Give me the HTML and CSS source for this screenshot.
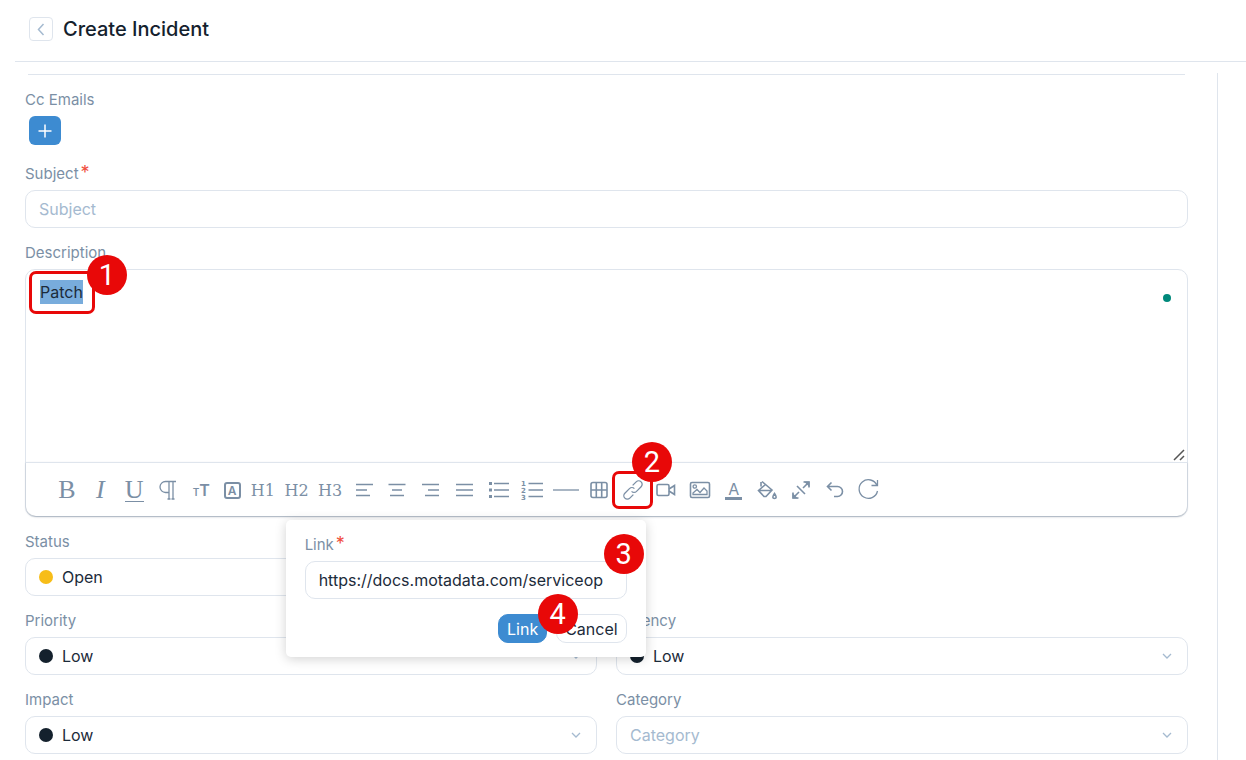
FILE: index.html
```html
<!DOCTYPE html>
<html lang="en">
<head>
  <meta charset="UTF-8">
  <meta name="viewport" content="width=device-width, initial-scale=1.0">
  <title>Create Incident</title>
  <link rel="stylesheet" href="styles.css">
</head>
<body>
  <header class="page-header">
    <button type="button" class="back" aria-label="Back">
      <svg width="24" height="24" viewBox="0 0 24 24"><path d="M14.5 7 L9.5 12.5 L14.5 18"/></svg>
    </button>
    <h1>Create Incident</h1>
  </header>

  <main class="content">
    <form class="incident">
      <div class="scrolled"></div>

      <div class="field">
        <label for="addCc">Cc Emails</label>
        <button type="button" id="addCc" class="add" aria-label="Add Cc email">
          <svg width="14" height="14" viewBox="0 0 14 14"><path d="M7 0.5 V13.5 M0.5 7 H13.5"/></svg>
        </button>
      </div>

      <div class="field">
        <label for="subject">Subject<span class="req">*</span></label>
        <input type="text" id="subject" name="subject" placeholder="Subject" required>
      </div>

      <div class="field">
        <label id="descLabel">Description</label>
        <div class="editor">
          <div class="editor-wrap">
            <div class="editor-body" contenteditable="true" role="textbox" aria-multiline="true" aria-labelledby="descLabel" spellcheck="false"><span class="selected">Patch</span></div>
            <span class="online"></span>
            <svg class="grip" width="14" height="14" viewBox="0 0 14 14"><path d="M1 12 L11 2 M7 12 L11 8"/></svg>
            <div class="callout callout-text"><span class="badge">1</span></div>
          </div>

          <div class="toolbar">
            <div class="tools">
              <button type="button" class="big" title="Bold">B</button>
              <button type="button" class="big" title="Italic"><i>I</i></button>
              <button type="button" class="big underline" title="Underline"><span>U</span></button>
              <button type="button" class="big" title="Paragraph">
                <svg width="24" height="24" viewBox="0 0 24 24"><path d="M20 3.500H9.500a5.500 5.500 0 0 0 0 11H13M13 3.500V21M17 3.500V21M11.500 21H14.500M15.500 21H18.500"/></svg>
              </button>
              <button type="button" class="sans" title="Font size"><small>T</small>T</button>
              <button type="button" class="sans boxed" title="Font family"><span>A</span></button>
              <button type="button" title="Heading 1">H1</button>
              <button type="button" title="Heading 2">H2</button>
              <button type="button" title="Heading 3">H3</button>
              <button type="button" title="Align left">
                <svg width="24" height="24" viewBox="0 0 24 24"><path class="bar" d="M4 6.500H21M4 12H15M4 17.500H18"/></svg>
              </button>
              <button type="button" title="Align center">
                <svg width="24" height="24" viewBox="0 0 24 24"><path class="bar" d="M3.500 6.500H20.500M7 12H17M5 17.500H19"/></svg>
              </button>
              <button type="button" title="Align right">
                <svg width="24" height="24" viewBox="0 0 24 24"><path class="bar" d="M3 6.500H20M9 12H20M6 17.500H20"/></svg>
              </button>
              <button type="button" title="Justify">
                <svg width="24" height="24" viewBox="0 0 24 24"><path class="bar" d="M3 6.500H20M3 12H20M3 17.500H20"/></svg>
              </button>
              <button type="button" title="Bullet list">
                <svg width="24" height="24" viewBox="0 0 24 24"><path d="M8 5.500H23M8 12H23M8 18.500H23"/><path class="fill" d="M3 4h3v3H3zM3 10.500h3v3H3zM3 17h3v3H3z"/></svg>
              </button>
              <button type="button" title="Numbered list">
                <svg width="24" height="24" viewBox="0 0 24 24"><path d="M8.500 5.500H23M8.500 12H23M8.500 18.500H23"/><text x="1" y="8">1</text><text x="1" y="15">2</text><text x="1" y="22">3</text></svg>
              </button>
              <button type="button" title="Horizontal line">
                <svg width="26" height="24" viewBox="0 0 26 24"><path d="M0 12H26"/></svg>
              </button>
              <button type="button" title="Table">
                <svg width="24" height="24" viewBox="0 0 24 24"><rect class="bar" x="4" y="4.500" width="16" height="15" rx="2"/><path class="bar" d="M9.300 4.500V19.500M14.700 4.500V19.500M4 12H20"/></svg>
              </button>
              <div class="link-item">
                <button type="button" title="Link">
                  <svg width="24" height="24" viewBox="0 0 24 24"><g transform="rotate(-45 12 12)"><path d="M9 15.500H4a3.500 3.500 0 0 1 0-7H10.500a3.500 3.500 0 0 1 3.500 3.500"/><path d="M15 8.500H20a3.500 3.500 0 0 1 0 7H13.500a3.500 3.500 0 0 1-3.500-3.500"/></g></svg>
                </button>
                <div class="callout callout-link"><span class="badge">2</span></div>

                <div class="popover" role="dialog" aria-label="Link">
                  <label for="linkUrl">Link<span class="req">*</span></label>
                  <input type="text" id="linkUrl" name="linkUrl" value="https://docs.motadata.com/serviceop">
                  <div class="actions">
                    <button type="button" class="btn primary">Link</button>
                    <button type="button" class="btn">Cancel</button>
                  </div>
                  <span class="badge badge-url">3</span>
                  <span class="badge badge-submit">4</span>
                </div>
              </div>
              <button type="button" title="Video">
                <svg width="24" height="24" viewBox="0 0 24 24"><rect class="bar" x="3" y="6.500" width="12" height="11" rx="1.500"/><path class="bar" d="M15 11 L20.500 7.500V16.500L15 13"/></svg>
              </button>
              <button type="button" title="Image">
                <svg width="24" height="24" viewBox="0 0 24 24"><rect class="bar" x="2.500" y="4.500" width="19" height="15" rx="1.500"/><circle cx="6.800" cy="8.500" r="1.700"/><path d="M5 16.500V15L9 11.500 12 14.500 16 10 19 13V16.500Z"/></svg>
              </button>
              <button type="button" class="sans color" title="Text color"><span>A</span></button>
              <button type="button" title="Background color">
                <svg width="24" height="24" viewBox="0 0 24 24"><path class="bar" d="M7 3.500 L17 12 L11 18.500 H9 L3.500 12.500 L10.500 6.500M4 12.500H17M6 4V8.500"/><path class="bar" d="M19.500 15.500c-2.500 3.500-2 5 0 5s2.500-1.500 0-5z"/></svg>
              </button>
              <button type="button" title="Expand">
                <svg width="24" height="24" viewBox="0 0 24 24"><path class="bar" d="M14 10 L20 4M10 14 L4 20M14.500 4H20V9.500M4 14.500V20H9.500M8 8 L16 16"/><path class="fill" d="M15 3.500H20.500V9zM3.500 15V20.500H9z"/></svg>
              </button>
              <button type="button" title="Undo">
                <svg width="24" height="24" viewBox="0 0 24 24"><path class="bar" d="M8.500 4.500 L4.500 8.500 L8.500 12.500M4.500 8.500H14.500a5 5 0 0 1 0 10H11"/></svg>
              </button>
              <button type="button" title="Redo">
                <svg width="24" height="24" viewBox="0 0 24 24"><path d="M21 7.500A9.300 9.300 0 1 0 21.500 13M21.500 2V7.500H15.500"/></svg>
              </button>
            </div>
          </div>
        </div>
      </div>

      <div class="grid">
        <div class="field first">
          <label for="status">Status</label>
          <div class="select open">
            <select id="status" name="status"><option>Open</option></select>
            <svg width="10" height="6" viewBox="0 0 10 6"><path d="M1 1 L5 5 L9 1"/></svg>
          </div>
        </div>
        <div class="field first">
          <label for="priority">Priority</label>
          <div class="select low">
            <select id="priority" name="priority"><option>Low</option></select>
            <svg width="10" height="6" viewBox="0 0 10 6"><path d="M1 1 L5 5 L9 1"/></svg>
          </div>
        </div>
        <div class="field">
          <label for="urgency">Urgency</label>
          <div class="select low">
            <select id="urgency" name="urgency"><option>Low</option></select>
            <svg width="10" height="6" viewBox="0 0 10 6"><path d="M1 1 L5 5 L9 1"/></svg>
          </div>
        </div>
        <div class="field first">
          <label for="impact">Impact</label>
          <div class="select low">
            <select id="impact" name="impact"><option>Low</option></select>
            <svg width="10" height="6" viewBox="0 0 10 6"><path d="M1 1 L5 5 L9 1"/></svg>
          </div>
        </div>
        <div class="field">
          <label for="category">Category</label>
          <div class="select empty">
            <select id="category" name="category"><option>Category</option></select>
            <svg width="10" height="6" viewBox="0 0 10 6"><path d="M1 1 L5 5 L9 1"/></svg>
          </div>
        </div>
      </div>
    </form>
  </main>
</body>
</html>
```
FILE: styles.css
```css
* {
  margin: 0;
  padding: 0;
  box-sizing: border-box;
  outline: none;
}

body {
  display: flex;
  flex-direction: column;
  height: 100vh;
  font-family: Inter, "Open Sans", sans-serif;
  font-size: 16px;
  color: #1c2b3a;
  background: #fff;
}

button, input, select {
  font: inherit;
  color: inherit;
}

button {
  border: none;
  background: none;
  cursor: pointer;
}

svg {
  display: block;
  fill: none;
  stroke: #7b8fa5;
  stroke-width: 1.3;
}

/* header */
.page-header {
  display: flex;
  align-items: center;
  gap: 10px;
  height: 62px;
  margin-left: 15px;
  padding: 0 14px 4px;
  border-bottom: 1px solid #dfe5ed;
}

.page-header h1 {
  font-size: 20px;
  font-weight: 500;
  line-height: 30px;
  color: #14212d;
}

.back {
  width: 24px;
  height: 24px;
  border: 1px solid #dfe5ed;
  border-radius: 4px;
}

.back svg {
  margin: -1px;
  stroke: #a5bad0;
  stroke-width: 1.5;
}

/* form */
.content {
  flex: 1;
  min-height: 0;
  margin-top: 11px;
  overflow-y: auto;
  scrollbar-width: none;
}

.incident {
  margin-right: 28px;
  padding: 0 29px 0 25px;
  border-right: 1px solid #dfe5ed;
}

.scrolled {
  height: 2px;
  margin: 0 3px 14px;
  border-bottom: 1px solid #dfe5ed;
}

.field {
  margin-bottom: 14px;
}

label {
  display: block;
  margin-bottom: 5px;
  font-size: 15px;
  line-height: 22px;
  color: #7b8fa5;
}

.req {
  margin-left: 2px;
  font-size: 18px;
  line-height: 16px;
  color: #f04e3e;
}

input, select {
  display: block;
  width: 100%;
  height: 38px;
  padding: 0 13px;
  border: 1px solid #dfe5ed;
  border-radius: 10px;
  background: #fff;
}

input::placeholder {
  color: #a5bad0;
}

.add {
  display: flex;
  align-items: center;
  justify-content: center;
  width: 32px;
  height: 29px;
  margin: 0 4px 18px;
  border-radius: 6px;
  background: #3d8bd1;
}

.add svg {
  stroke: #fff;
  stroke-width: 1.5;
}

/* editor */
.editor {
  border: 1px solid #dfe5ed;
  border-radius: 10px;
}

.editor-wrap {
  position: relative;
}

.editor-body {
  height: 192px;
  padding: 10px 14px;
  line-height: 24px;
  overflow: auto;
  resize: vertical;
}

.selected {
  padding: 2px 0;
  background: #78acdc;
}

.online {
  position: absolute;
  top: 24px;
  right: 16px;
  width: 8px;
  height: 8px;
  border-radius: 50%;
  background: #00897b;
}

.grip {
  position: absolute;
  right: 0;
  bottom: 0;
  background: #fff;
  stroke: #555;
  stroke-width: 1.5;
  pointer-events: none;
}

.toolbar {
  height: 54px;
  padding: 8px 24px;
  border-top: 1px solid #dfe5ed;
  border-radius: 0 0 10px 10px;
  box-shadow: 0 1px 2px rgba(30, 50, 70, 0.3);
}

.tools {
  display: flex;
  max-width: 835px;
}

.tools > * {
  flex: 1 1 0;
}

.tools > button,
.link-item > button {
  display: flex;
  align-items: center;
  justify-content: center;
  height: 38px;
  font-family: "DejaVu Serif", serif;
  font-size: 16px;
  color: #7b8fa5;
}

.tools .big {
  font-family: "Liberation Serif", serif;
  font-size: 26px;
}

.underline span {
  width: 19px;
  border-bottom: 1px solid #7b8fa5;
  line-height: 22px;
}

.tools .sans {
  font-family: Inter, sans-serif;
  font-weight: 600;
}

.tools small {
  padding-top: 4px;
  font-size: 10px;
}

.tools .boxed {
  flex: 0 0 28px;
}

.boxed span {
  width: 17px;
  height: 17px;
  border: 2px solid #7b8fa5;
  border-radius: 3px;
  font-size: 12px;
  line-height: 13px;
}

.color span {
  width: 17px;
  border-bottom: 3px solid #7b8fa5;
  font-weight: 400;
  line-height: 16px;
}

.tools .bar {
  stroke-width: 1.6;
}

.tools .fill {
  fill: #7b8fa5;
  stroke: none;
}

.tools text {
  fill: #7b8fa5;
  stroke: none;
  font: bold 7px "DejaVu Sans", sans-serif;
}

.link-item {
  position: relative;
}

.link-item > button {
  width: 100%;
}

/* link popover */
.popover {
  position: absolute;
  top: 49px;
  right: 4px;
  z-index: 5;
  width: 360px;
  padding: 14px 19px;
  border-radius: 5px;
  background: #fff;
  box-shadow: 0 2px 12px rgba(0, 0, 0, 0.18);
}

.actions {
  display: flex;
  justify-content: flex-end;
  gap: 9px;
  margin-top: 15px;
}

.btn {
  height: 29px;
  padding: 0 8px;
  border: 1px solid #dfe5ed;
  border-radius: 10px;
}

.btn.primary {
  border-color: #3d8bd1;
  background: #3d8bd1;
  color: #fff;
}

/* numbered callouts */
.callout {
  position: absolute;
  border: 3px solid #e80808;
  border-radius: 7px;
  pointer-events: none;
}

.callout-text {
  top: 1px;
  left: 3px;
  width: 66px;
  height: 43px;
}

.callout-link {
  top: 0;
  left: -4px;
  z-index: 6;
  width: 41px;
  height: 38px;
}

.badge {
  position: absolute;
  width: 40px;
  height: 40px;
  border-radius: 50%;
  background: #e80808;
  color: #fff;
  font-family: Roboto, "Liberation Sans", sans-serif;
  font-size: 29px;
  line-height: 41px;
  text-align: center;
}

.callout-text .badge {
  top: -19px;
  left: 55px;
}

.callout-link .badge {
  top: -32px;
  left: 17px;
}

.badge-url {
  top: 14px;
  right: 2px;
}

.badge-submit {
  top: 74px;
  right: 68px;
}

/* select fields */
.grid {
  display: grid;
  grid-template-columns: 1fr 1fr;
  column-gap: 19px;
}

.first {
  grid-column: 1;
}

.select {
  position: relative;
}

.select select {
  appearance: none;
  padding-left: 36px;
}

.select svg {
  position: absolute;
  top: 16px;
  right: 16px;
  stroke: #a5bad0;
}

.select::before {
  content: "";
  position: absolute;
  top: 12px;
  left: 14px;
  width: 14px;
  height: 14px;
  border-radius: 50%;
}

.open::before {
  background: #f7bd18;
}

.low::before {
  background: #14212d;
}

.empty select {
  padding-left: 13px;
  color: #a5bad0;
}
```
